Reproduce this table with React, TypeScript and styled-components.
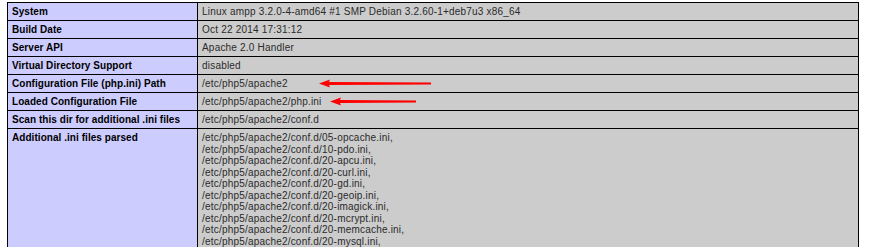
import * as React from 'react';
import styled, { createGlobalStyle } from 'styled-components';

const GlobalStyle = createGlobalStyle`
  html, body {
    margin: 0;
    padding: 0;
    background: #ffffff;
    overflow: hidden;
  }
  body {
    font-family: 'Liberation Sans', Arial, sans-serif;
  }
`;

const Page = styled.div`
  padding: 2px 0 0 7px;
  width: 852px;
`;

const Table = styled.table`
  width: 852px;
  border-collapse: collapse;
  table-layout: fixed;
  font-size: 10px;
  line-height: 11.5px;
`;

const Cell = styled.td`
  border: 1px solid #000;
  padding: 3px 4px 2.5px 4px;
  vertical-align: top;
  text-align: left;
`;

const Key = styled(Cell)`
  width: 181px;
  background-color: #ccccff;
  font-weight: bold;
  color: #000;
  letter-spacing: 0.05px;
`;

const Value = styled(Cell)`
  position: relative;
  background-color: #cccccc;
  color: #2a2a2a;
  letter-spacing: 0.2px;
`;

const Arrow = styled.svg<{ $left: number }>`
  position: absolute;
  top: 3px;
  left: ${(p) => p.$left}px;
  height: 11px;
  overflow: visible;
`;

const RedArrow = ({ left, width }: { left: number; width: number }) => (
  <Arrow $left={left} width={width} viewBox={`0 0 ${width} 11`}>
    <path
      d={`M0 5.5 L11 1.5 L10 4 L${width} 4.5 L${width} 6.5 L10 7 L11 9.5 Z`}
      fill="#ff0000"
    />
  </Arrow>
);

const iniFiles = [
  '05-opcache.ini',
  '10-pdo.ini',
  '20-apcu.ini',
  '20-curl.ini',
  '20-gd.ini',
  '20-geoip.ini',
  '20-imagick.ini',
  '20-mcrypt.ini',
  '20-memcache.ini',
  '20-mysql.ini',
  '20-mysqli.ini',
  '20-pdo_mysql.ini',
  '20-readline.ini',
];

const rows: { name: string; value: string; arrow?: [number, number] }[] = [
  {
    name: 'System',
    value: 'Linux ampp 3.2.0-4-amd64 #1 SMP Debian 3.2.60-1+deb7u3 x86_64',
  },
  { name: 'Build Date', value: 'Oct 22 2014 17:31:12' },
  { name: 'Server API', value: 'Apache 2.0 Handler' },
  { name: 'Virtual Directory Support', value: 'disabled' },
  {
    name: 'Configuration File (php.ini) Path',
    value: '/etc/php5/apache2',
    arrow: [121, 112],
  },
  {
    name: 'Loaded Configuration File',
    value: '/etc/php5/apache2/php.ini',
    arrow: [132, 86],
  },
  {
    name: 'Scan this dir for additional .ini files',
    value: '/etc/php5/apache2/conf.d',
  },
];

const App = () => {
  return (
    <Page>
      <GlobalStyle />
      <Table>
        <tbody>
          {rows.map((r) => (
            <tr key={r.name}>
              <Key>{r.name}</Key>
              <Value>
                {r.value}
                {r.arrow ? <RedArrow left={r.arrow[0]} width={r.arrow[1]} /> : null}
              </Value>
            </tr>
          ))}
          <tr>
            <Key>Additional .ini files parsed</Key>
            <Value>
              {iniFiles.map((f) => (
                <div key={f}>/etc/php5/apache2/conf.d/{f},</div>
              ))}
            </Value>
          </tr>
        </tbody>
      </Table>
    </Page>
  );
};

export default App;
